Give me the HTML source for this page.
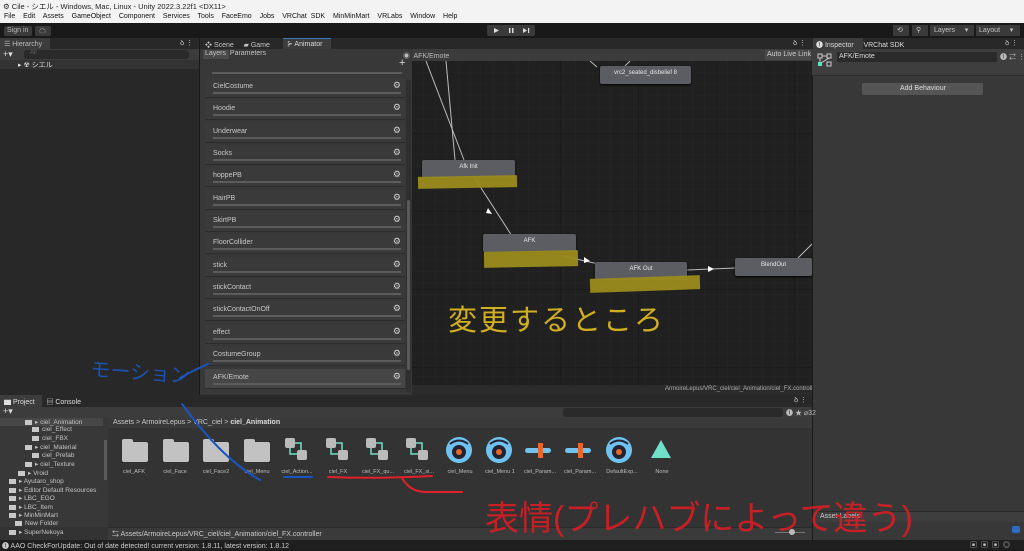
<!DOCTYPE html>
<html><head><meta charset="utf-8"><style>
*{margin:0;padding:0;box-sizing:border-box}
body{width:1024px;height:550px;overflow:hidden;background:#191919;font-family:"Liberation Sans","Noto Sans CJK JP",sans-serif;font-size:7px;color:#c4c4c4;position:relative}
.a{position:absolute}
.t{position:absolute;white-space:nowrap}
.row{position:absolute;left:205px;width:200px;height:20px;background:#3a3a3a;border-bottom:1px solid #2c2c2c}
.row span{position:absolute;left:8px;top:5px;font-size:7px;color:#c8c8c8}
.row i{position:absolute;left:8px;right:4px;bottom:3px;height:2px;background:#5c5c5c}
.row b{position:absolute;right:4px;top:2px;font-size:9px;color:#d0d0d0;font-weight:normal}
.node{position:absolute;background:#5b5d62;border-radius:2px;color:#e8e8e8;font-size:6px;text-align:center;box-shadow:0 1px 2px #000}
.hl{position:absolute;background:#9b8b1c;opacity:.95}
.ic{position:absolute;top:437px;width:28px;height:26px}
.lb{position:absolute;top:469px;font-size:5.5px;color:#bdbdbd;width:42px;text-align:center}
.fold{background:#c2c2c2;border-radius:0 2px 2px 2px}
.fold:before{content:"";position:absolute;left:0;top:-3px;width:11px;height:4px;background:#c2c2c2;border-radius:2px 2px 0 0}
.tree{position:absolute;font-size:6.5px;color:#c4c4c4}
.tree:before{content:"";display:inline-block;width:7px;height:5px;background:#c8c8c8;margin-right:3px;vertical-align:-1px}
</style></head><body>
<div class="a" style="left:0;top:0;width:1024px;height:23px;background:#f3f3f3"></div>
<div class="t" style="left:3px;top:1px;font-size:7.5px;color:#222">⚙ Cile - シエル - Windows, Mac, Linux - Unity 2022.3.22f1 &lt;DX11&gt;</div>
<div class="t" style="left:4px;top:13px;font-size:7px;color:#111;word-spacing:2px">File&nbsp; Edit&nbsp; Assets&nbsp; GameObject&nbsp; Component&nbsp; Services&nbsp; Tools&nbsp; FaceEmo&nbsp; Jobs&nbsp; VRChat SDK&nbsp; MinMinMart&nbsp; VRLabs&nbsp; Window&nbsp; Help</div>
<div class="a" style="left:4px;top:26px;width:28px;height:10px;background:#3a3a3a;border-radius:2px"></div>
<div class="t" style="left:7px;top:27px;color:#bbb">Sign in</div>
<div class="a" style="left:35px;top:26px;width:16px;height:10px;background:#3a3a3a;border-radius:2px"></div>
<div class="t" style="left:39px;top:26px;color:#ddd">☁</div>
<div class="a" style="left:487px;top:25px;width:48px;height:11px;background:#3a3a3a;border-radius:2px"></div>
<svg class="a" style="left:487px;top:25px" width="48" height="11"><path d="M7 3l5 2.5-5 2.5z" fill="#ddd"/><rect x="22" y="3" width="1.5" height="5" fill="#ddd"/><rect x="25" y="3" width="1.5" height="5" fill="#ddd"/><path d="M36 3l4 2.5-4 2.5z" fill="#ddd"/><rect x="41" y="3" width="1.2" height="5" fill="#ddd"/></svg>
<div class="a" style="left:893px;top:25px;width:16px;height:11px;background:#3a3a3a"></div>
<div class="t" style="left:897px;top:26px;color:#ccc">⟲</div>
<div class="a" style="left:912px;top:25px;width:16px;height:11px;background:#3a3a3a"></div>
<div class="t" style="left:916px;top:26px;color:#ccc">⚲</div>
<div class="a" style="left:930px;top:25px;width:44px;height:11px;background:#3a3a3a"></div>
<div class="t" style="left:934px;top:26px">Layers&nbsp;&nbsp;&nbsp;&nbsp;&nbsp;▾</div>
<div class="a" style="left:976px;top:25px;width:44px;height:11px;background:#3a3a3a"></div>
<div class="t" style="left:979px;top:26px">Layout&nbsp;&nbsp;&nbsp;&nbsp;&nbsp;▾</div>

<div class="a" style="left:0;top:38px;width:199px;height:357px;background:#282828"></div>
<div class="a" style="left:0;top:38px;width:50px;height:11px;background:#3c3c3c"></div>
<div class="t" style="left:4px;top:40px;color:#bbb">☰ Hierarchy</div>
<div class="t" style="left:180px;top:39px">ꝺ ⋮</div>
<div class="a" style="left:0;top:49px;width:199px;height:11px;background:#3c3c3c"></div>
<div class="t" style="left:3px;top:49px;font-size:9px;color:#ddd">+▾</div>
<div class="a" style="left:24px;top:50px;width:165px;height:9px;background:#2a2a2a;border-radius:3px"></div>
<div class="t" style="left:30px;top:50px;color:#666;font-size:6px">All</div>
<div class="a" style="left:0;top:60px;width:199px;height:9px;background:#333"></div>
<div class="t" style="left:18px;top:60px;color:#ddd">▸ ☢ シエル</div>

<div class="a" style="left:200px;top:38px;width:612px;height:11px;background:#282828"></div>
<div class="t" style="left:205px;top:40px">❖ Scene&nbsp;&nbsp;&nbsp;&nbsp; ▰ Game</div>
<div class="a" style="left:283px;top:38px;width:48px;height:11px;background:#3c3c3c;border-top:1px solid #3a79bb"></div>
<div class="t" style="left:287px;top:40px;color:#ddd">⊱ Animator</div>
<div class="t" style="left:793px;top:39px">ꝺ ⋮</div>
<div class="a" style="left:200px;top:49px;width:212px;height:346px;background:#383838"></div>
<div class="a" style="left:203px;top:50px;width:26px;height:9px;background:#4a4a4a"></div>
<div class="t" style="left:205px;top:50px">Layers&nbsp; Parameters</div>
<div class="t" style="left:399px;top:57px;font-size:11px;color:#ddd">+</div>
<div class="a" style="left:212px;top:72px;width:190px;height:2px;background:#5c5c5c"></div>
<div class="a" style="left:406px;top:80px;width:5px;height:312px;background:#2f2f2f"></div>
<div class="a" style="left:407px;top:200px;width:3px;height:170px;background:#5a5a5a;border-radius:2px"></div>

<div class="row" style="top:78px"><span>CielCostume</span><i></i><b>⚙</b></div>
<div class="row" style="top:100px"><span>Hoodie</span><i></i><b>⚙</b></div>
<div class="row" style="top:123px"><span>Underwear</span><i></i><b>⚙</b></div>
<div class="row" style="top:145px"><span>Socks</span><i></i><b>⚙</b></div>
<div class="row" style="top:167px"><span>hoppePB</span><i></i><b>⚙</b></div>
<div class="row" style="top:190px"><span>HairPB</span><i></i><b>⚙</b></div>
<div class="row" style="top:212px"><span>SkirtPB</span><i></i><b>⚙</b></div>
<div class="row" style="top:234px"><span>FloorCollider</span><i></i><b>⚙</b></div>
<div class="row" style="top:257px"><span>stick</span><i></i><b>⚙</b></div>
<div class="row" style="top:279px"><span>stickContact</span><i></i><b>⚙</b></div>
<div class="row" style="top:301px"><span>stickContactOnOff</span><i></i><b>⚙</b></div>
<div class="row" style="top:324px"><span>effect</span><i></i><b>⚙</b></div>
<div class="row" style="top:346px"><span>CostumeGroup</span><i></i><b>⚙</b></div>
<div class="row" style="top:369px;background:#464646"><span>AFK/Emote</span><i></i><b>⚙</b></div>

<div class="a" style="left:412px;top:49px;width:400px;height:12px;background:#3c3c3c"></div>
<div class="t" style="left:403px;top:51px;color:#bbb">◉&nbsp; AFK/Emote</div>
<div class="a" style="left:765px;top:50px;width:46px;height:10px;background:#4a4a4a"></div>
<div class="t" style="left:767px;top:51px;color:#ccc">Auto Live Link</div>
<svg class="a" style="left:412px;top:61px" width="400" height="325">
<defs><pattern id="g" width="11.7" height="11.7" patternUnits="userSpaceOnUse"><path d="M11.7 0V11.7H0" fill="none" stroke="#262626" stroke-width="1"/></pattern>
<pattern id="G" width="78" height="78" patternUnits="userSpaceOnUse" x="-7" y="-5"><path d="M78 0V78H0" fill="none" stroke="#161616" stroke-width="1"/></pattern></defs>
<rect width="400" height="325" fill="#202020"/><rect width="400" height="325" fill="url(#g)"/><rect width="400" height="325" fill="url(#G)"/>
<g stroke="#bbb" stroke-width="1" fill="none">
<line x1="14" y1="0" x2="52" y2="99"/><line x1="34" y1="0" x2="43" y2="99"/>
<line x1="178" y1="0" x2="185" y2="6"/><line x1="218" y1="0" x2="212" y2="6"/>
<line x1="62" y1="116" x2="100" y2="175"/><line x1="150" y1="195" x2="196" y2="205"/>
<line x1="275" y1="209" x2="323" y2="207"/><line x1="386" y1="197" x2="400" y2="183"/>
</g>
<g fill="#fff"><path d="M76 147l4 6-6-1z"/><path d="M172 196l6 4-6 2z"/><path d="M296 205l6 3-6 3z"/></g>
</svg>
<div class="node" style="left:600px;top:66px;width:91px;height:18px;line-height:14px">vrc2_seated_disbelief 8</div>
<div class="node" style="left:422px;top:160px;width:93px;height:18px;line-height:14px">Afk Init</div>
<div class="hl" style="left:418px;top:176px;width:99px;height:12px;transform:rotate(-1deg)"></div>
<div class="node" style="left:483px;top:234px;width:93px;height:18px;line-height:14px">AFK</div>
<div class="hl" style="left:484px;top:251px;width:94px;height:16px;transform:rotate(-1deg)"></div>
<div class="node" style="left:595px;top:262px;width:92px;height:18px;line-height:14px">AFK Out</div>
<div class="hl" style="left:590px;top:277px;width:110px;height:14px;transform:rotate(-2deg)"></div>
<div class="node" style="left:735px;top:258px;width:77px;height:18px;line-height:14px">BlendOut</div>
<div class="a" style="left:412px;top:385px;width:400px;height:10px;background:#2b2b2b"></div>
<div class="t" style="left:665px;top:386px;font-size:6px;color:#aaa">ArmoireLepus/VRC_ciel/ciel_Animation/ciel_FX.controller</div>

<div class="a" style="left:812px;top:38px;width:212px;height:502px;background:#383838;border-left:1px solid #1a1a1a"></div>
<div class="a" style="left:812px;top:38px;width:212px;height:11px;background:#282828"></div>
<div class="a" style="left:813px;top:38px;width:50px;height:11px;background:#3c3c3c"></div>
<div class="t" style="left:816px;top:40px;color:#ddd">❶ Inspector&nbsp;&nbsp;&nbsp;&nbsp; VRChat SDK</div>
<div class="t" style="left:1005px;top:39px">ꝺ ⋮</div>
<div class="a" style="left:812px;top:49px;width:212px;height:27px;background:#3e3e3e;border-bottom:1px solid #2a2a2a"></div>
<svg class="a" style="left:817px;top:53px" width="16" height="15"><g fill="none" stroke="#ccc" stroke-width="1"><rect x="1" y="1" width="4" height="4"/><rect x="10" y="1" width="4" height="4"/><rect x="10" y="9" width="4" height="4"/><path d="M5 3h5M3 5v4M12 5l-8 5"/></g><rect x="1" y="9" width="4" height="4" fill="#5de0c0"/></svg>
<div class="a" style="left:837px;top:52px;width:160px;height:10px;background:#2a2a2a"></div>
<div class="t" style="left:839px;top:53px;color:#ddd">AFK/Emote</div>
<div class="t" style="left:1000px;top:52px;color:#bbb">❶ ⇄ ⋮</div>
<div class="a" style="left:862px;top:83px;width:121px;height:12px;background:#555;border-radius:2px"></div>
<div class="t" style="left:900px;top:85px;color:#ddd">Add Behaviour</div>
<div class="a" style="left:814px;top:511px;width:210px;height:11px;background:#3e3e3e;border-top:1px solid #2a2a2a"></div>
<div class="t" style="left:820px;top:513px;color:#ccc">Asset Labels</div>
<div class="a" style="left:1012px;top:526px;width:8px;height:7px;background:#2d6bc4;border-radius:2px"></div>

<div class="a" style="left:0;top:395px;width:812px;height:145px;background:#333"></div>
<div class="a" style="left:0;top:395px;width:812px;height:12px;background:#282828"></div>
<div class="a" style="left:0;top:395px;width:42px;height:12px;background:#3c3c3c"></div>
<div class="t" style="left:4px;top:397px;color:#ddd">▆ Project&nbsp;&nbsp;&nbsp;&nbsp;&nbsp; ▤ Console</div>
<div class="t" style="left:794px;top:396px">ꝺ ⋮</div>
<div class="a" style="left:0;top:407px;width:812px;height:11px;background:#3c3c3c"></div>
<div class="t" style="left:3px;top:406px;font-size:9px;color:#ddd">+▾</div>
<div class="a" style="left:563px;top:408px;width:220px;height:9px;background:#2a2a2a;border-radius:3px"></div>
<div class="t" style="left:786px;top:408px;color:#bbb">❶ ★ ⌀32</div>
<div class="a" style="left:0;top:418px;width:108px;height:109px;background:#383838"></div>
<div class="a" style="left:0;top:418px;width:103px;height:8px;background:#474747"></div>
<div class="a" style="left:104px;top:440px;width:3px;height:40px;background:#5a5a5a"></div>
<div class="tree" style="left:25px;top:418px">▸ ciel_Animation</div>
<div class="tree" style="left:32px;top:426px">ciel_Effect</div>
<div class="tree" style="left:32px;top:435px">ciel_FBX</div>
<div class="tree" style="left:25px;top:443px">▸ ciel_Material</div>
<div class="tree" style="left:32px;top:452px">ciel_Prefab</div>
<div class="tree" style="left:25px;top:460px">▸ ciel_Texture</div>
<div class="tree" style="left:18px;top:469px">▸ Vroid</div>
<div class="tree" style="left:9px;top:477px">▸ Ayutaro_shop</div>
<div class="tree" style="left:9px;top:486px">▸ Editor Default Resources</div>
<div class="tree" style="left:9px;top:494px">▸ LBC_EGO</div>
<div class="tree" style="left:9px;top:503px">▸ LBC_Item</div>
<div class="tree" style="left:9px;top:511px">▸ MinMinMart</div>
<div class="tree" style="left:15px;top:520px">New Folder</div>
<div class="tree" style="left:9px;top:528px">▸ SuperNekoya</div>
<div class="a" style="left:108px;top:418px;width:704px;height:10px;background:#3a3a3a"></div>
<div class="t" style="left:113px;top:419px;color:#c8c8c8">Assets &gt; ArmoireLepus &gt; VRC_ciel &gt; <b style="color:#ddd">ciel_Animation</b></div>

<div class="ic fold" style="left:122px;top:442px;height:20px;width:26px"></div>
<div class="ic fold" style="left:163px;top:442px;height:20px;width:26px"></div>
<div class="ic fold" style="left:203px;top:442px;height:20px;width:26px"></div>
<div class="ic fold" style="left:244px;top:442px;height:20px;width:26px"></div>
<svg class="a" style="left:283px;top:437px" width="150" height="28"><g id="ctl"><rect x="2" y="1" width="10" height="10" rx="2" fill="#bbb"/><rect x="14" y="13" width="10" height="10" rx="2" fill="#bbb"/><path d="M12 6h6v7" fill="none" stroke="#6ee0c8" stroke-width="1.5"/><path d="M7 11v6h7" fill="none" stroke="#6ee0c8" stroke-width="1.5"/></g><use href="#ctl" x="41"/><use href="#ctl" x="81"/><use href="#ctl" x="121"/></svg>
<svg class="a" style="left:445px;top:436px" width="240" height="30"><g id="mn"><circle cx="14" cy="14" r="13" fill="#6fc3ee"/><circle cx="14" cy="16" r="7" fill="#223"/><circle cx="14" cy="16" r="3" fill="#e8672c"/><path d="M5 8q9-7 18 0" fill="none" stroke="#223" stroke-width="2"/></g><use href="#mn" x="40"/><g id="pr"><rect x="80" y="12" width="26" height="5" rx="2.5" fill="#6fc3ee"/><rect x="93" y="7" width="5" height="15" fill="#e8672c"/></g><use href="#pr" x="40"/><use href="#mn" x="160"/><path d="M216 4l10 18h-20z" fill="#6ee0c8"/></svg>
<div class="lb" style="left:113px">ciel_AFK</div><div class="lb" style="left:154px">ciel_Face</div><div class="lb" style="left:195px">ciel_Face2</div><div class="lb" style="left:236px">ciel_Menu</div>
<div class="lb" style="left:276px">ciel_Action...</div><div class="lb" style="left:317px">ciel_FX</div><div class="lb" style="left:357px">ciel_FX_qu...</div><div class="lb" style="left:398px">ciel_FX_si...</div>
<div class="lb" style="left:439px">ciel_Menu</div><div class="lb" style="left:479px">ciel_Menu 1</div><div class="lb" style="left:519px">ciel_Param...</div><div class="lb" style="left:559px">ciel_Param...</div><div class="lb" style="left:601px">DefaultExp...</div><div class="lb" style="left:641px">None</div>
<div class="a" style="left:108px;top:527px;width:704px;height:13px;background:#3a3a3a;border-top:1px solid #2a2a2a"></div>
<div class="t" style="left:112px;top:529px;color:#ccc">⇆ Assets/ArmoireLepus/VRC_ciel/ciel_Animation/ciel_FX.controller</div>
<div class="a" style="left:775px;top:532px;width:30px;height:1px;background:#777"></div>
<div class="a" style="left:789px;top:529px;width:6px;height:6px;background:#bbb;border-radius:50%"></div>
<div class="a" style="left:0;top:540px;width:1024px;height:10px;background:#1f1f1f"></div>
<div class="t" style="left:2px;top:541px;color:#ccc">❶ AAO CheckForUpdate: Out of date detected! current version: 1.8.11, latest version: 1.8.12</div>
<div class="t" style="left:970px;top:540px;color:#ccc;letter-spacing:4px">▣▣▣◎</div>

<svg class="a" style="left:0;top:0" width="1024" height="550">
<g fill="none" stroke-linecap="round">
<path d="M182 404q40 55 78 76" stroke="#1a56c0" stroke-width="2"/>
<path d="M180 378q10-6 28-14" stroke="#1a56c0" stroke-width="2"/>
<path d="M284 477h28" stroke="#1a56c0" stroke-width="2"/>
<path d="M328 477q50 2 104-1" stroke="#e0202a" stroke-width="2"/>
<path d="M402 478q8 14 24 14h36" stroke="#e0202a" stroke-width="2"/>
</g>
<text x="90" y="376" font-size="20" fill="#1a56c0" opacity=".9" font-family="Liberation Sans,Noto Sans CJK JP,sans-serif" transform="rotate(4 90 376)">モーション</text>
<text x="448" y="330" font-size="29" fill="#f0c820" opacity=".85" letter-spacing="2" font-family="Liberation Sans,Noto Sans CJK JP,sans-serif">変更するところ</text>
<text x="485" y="530" font-size="34" fill="#e01c24" opacity=".85" font-family="Liberation Sans,Noto Sans CJK JP,sans-serif">表情(プレハブによって違う)</text>
</svg>
</body></html>
